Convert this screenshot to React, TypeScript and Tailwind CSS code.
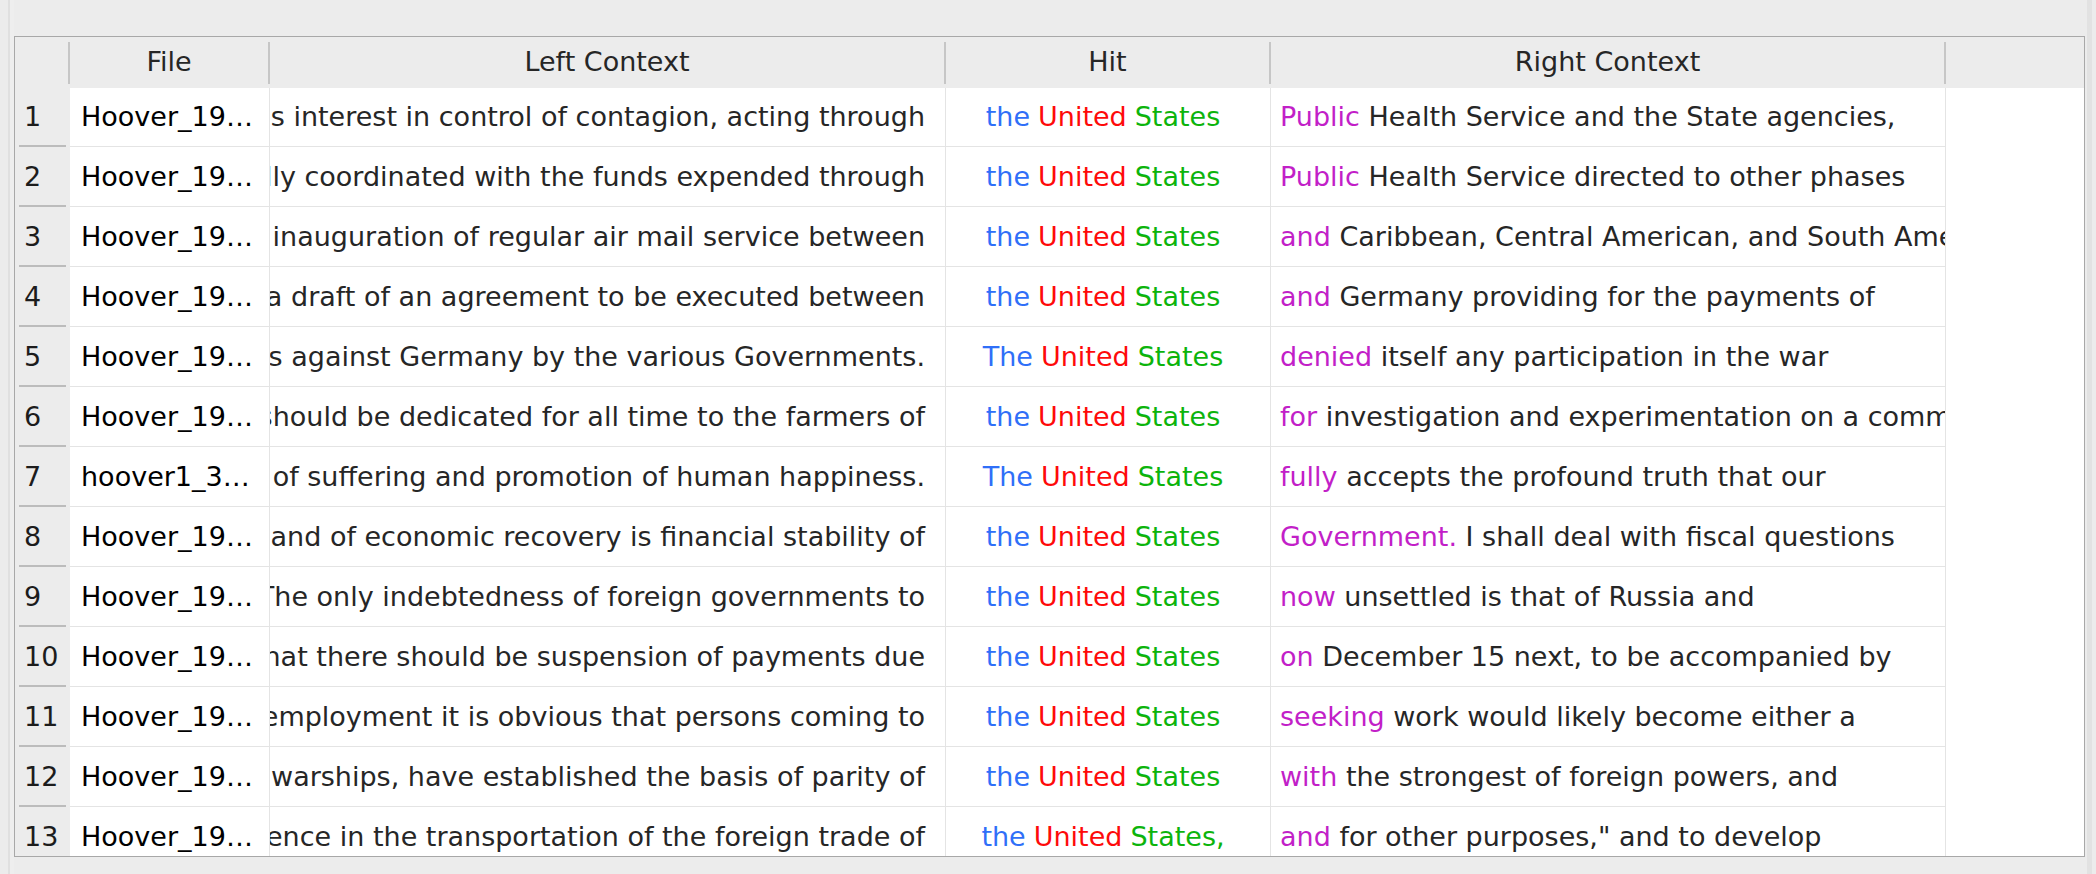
import React from "react";

type Row = {
    file: string;
    left: string;
    the: string;
    last: string;
    key: string;
    rest: string;
};

const rows: Row[] = [
    { file: "Hoover_19…", left: "the Nation's interest in control of contagion, acting through", the: "the", last: "States", key: "Public", rest: " Health Service and the State agencies," },
    { file: "Hoover_19…", left: "should be fully coordinated with the funds expended through", the: "the", last: "States", key: "Public", rest: " Health Service directed to other phases" },
    { file: "Hoover_19…", left: "and the inauguration of regular air mail service between", the: "the", last: "States", key: "and", rest: " Caribbean, Central American, and South American countries" },
    { file: "Hoover_19…", left: "to sign a draft of an agreement to be executed between", the: "the", last: "States", key: "and", rest: " Germany providing for the payments of" },
    { file: "Hoover_19…", left: "the claims against Germany by the various Governments.", the: "The", last: "States", key: "denied", rest: " itself any participation in the war" },
    { file: "Hoover_19…", left: "and should be dedicated for all time to the farmers of", the: "the", last: "States", key: "for", rest: " investigation and experimentation on a commercial scale" },
    { file: "hoover1_3…", left: "the relief of suffering and promotion of human happiness.", the: "The", last: "States", key: "fully", rest: " accepts the profound truth that our" },
    { file: "Hoover_19…", left: "the foundation of business and of economic recovery is financial stability of", the: "the", last: "States", key: "Government.", rest: " I shall deal with fiscal questions" },
    { file: "Hoover_19…", left: "The only indebtedness of foreign governments to", the: "the", last: "States", key: "now", rest: " unsettled is that of Russia and" },
    { file: "Hoover_19…", left: "that there should be suspension of payments due", the: "the", last: "States", key: "on", rest: " December 15 next, to be accompanied by" },
    { file: "Hoover_19…", left: "of unemployment it is obvious that persons coming to", the: "the", last: "States", key: "seeking", rest: " work would likely become either a" },
    { file: "Hoover_19…", left: "and other warships, have established the basis of parity of", the: "the", last: "States", key: "with", rest: " the strongest of foreign powers, and" },
    { file: "Hoover_19…", left: "of independence in the transportation of the foreign trade of", the: "the", last: "States,", key: "and", rest: " for other purposes,\" and to develop" },
];

const cols = "grid grid-cols-[55px_200px_676px_325px_675px_138px]";

function HeaderCell({ label, sep = true }: { label: string; sep?: boolean }) {
    return (
        <div className="flex items-center">
            <div className="flex-1 text-center text-[#262626]">{label}</div>
            {sep && <div className="w-[2px] h-[42px] bg-[#c6c6c6]" />}
        </div>
    );
}

export default function App() {
    return (
        <div className="w-[2096px] h-[874px] bg-[#ececec] flex font-['DejaVu_Sans',sans-serif] text-[27px] overflow-hidden">
            {/* window edge on the left */}
            <div className="w-[8px] shrink-0" />
            <div className="w-[2px] shrink-0 bg-[#e0e0e0]" />
            <div className="w-[4px] shrink-0 bg-[#eeeeee]" />

            <div className="pt-[36px] shrink-0">
                <div className="w-[2071px] h-[821px] border border-[#a8a8a8] flex flex-col">
                    {/* column headers */}
                    <div className={`${cols} h-[51px] bg-[#ececec] shrink-0`}>
                        <HeaderCell label="" />
                        <HeaderCell label="File" />
                        <HeaderCell label="Left Context" />
                        <HeaderCell label="Hit" />
                        <HeaderCell label="Right Context" />
                        <div />
                    </div>

                    {/* table body */}
                    <div className="flex-1 overflow-hidden bg-white">
                        <div className="-mt-[1px]">
                            {rows.map((r, i) => (
                                <div key={i} className={`${cols} h-[60px]`}>
                                    <div className="bg-[#ececec] flex flex-col">
                                        <div className="flex-1 flex items-center pl-[9px] pt-[2px] text-[#1c1c1c]">
                                            {i + 1}
                                        </div>
                                        <div className="h-[2px] mx-[4px] bg-[#bcbcbc]" />
                                    </div>
                                    <div className="flex items-center pl-[11px] pt-[2px] border-r border-b border-[#e4e4e4] text-black whitespace-nowrap overflow-hidden">
                                        {r.file}
                                    </div>
                                    <div className="flex items-center justify-end pr-[20px] pt-[2px] border-r border-b border-[#e4e4e4] text-[#262626] whitespace-nowrap overflow-hidden">
                                        <span className="shrink-0">{r.left}</span>
                                    </div>
                                    <div className="flex items-center justify-center pr-[10px] pt-[2px] border-r border-b border-[#e4e4e4] whitespace-nowrap overflow-hidden">
                                        <span className="text-[#2f6ff8]">{r.the}</span>
                                        <span className="text-[#fe0a0a] ml-[8px]">United</span>
                                        <span className="text-[#0cb40c] ml-[8px]">{r.last}</span>
                                    </div>
                                    <div className="flex items-center pl-[9px] pt-[2px] border-r border-b border-[#e4e4e4] text-[#262626] whitespace-nowrap overflow-hidden">
                                        <span className="shrink-0">
                                            <span className="text-[#c21fc8]">{r.key}</span>
                                            {r.rest}
                                        </span>
                                    </div>
                                    <div />
                                </div>
                            ))}
                        </div>
                    </div>
                </div>
            </div>

            {/* window edge on the right */}
            <div className="w-[2px] shrink-0" />
            <div className="w-[5px] shrink-0 bg-[#e2e2e2]" />
            <div className="flex-1" />
        </div>
    );
}
